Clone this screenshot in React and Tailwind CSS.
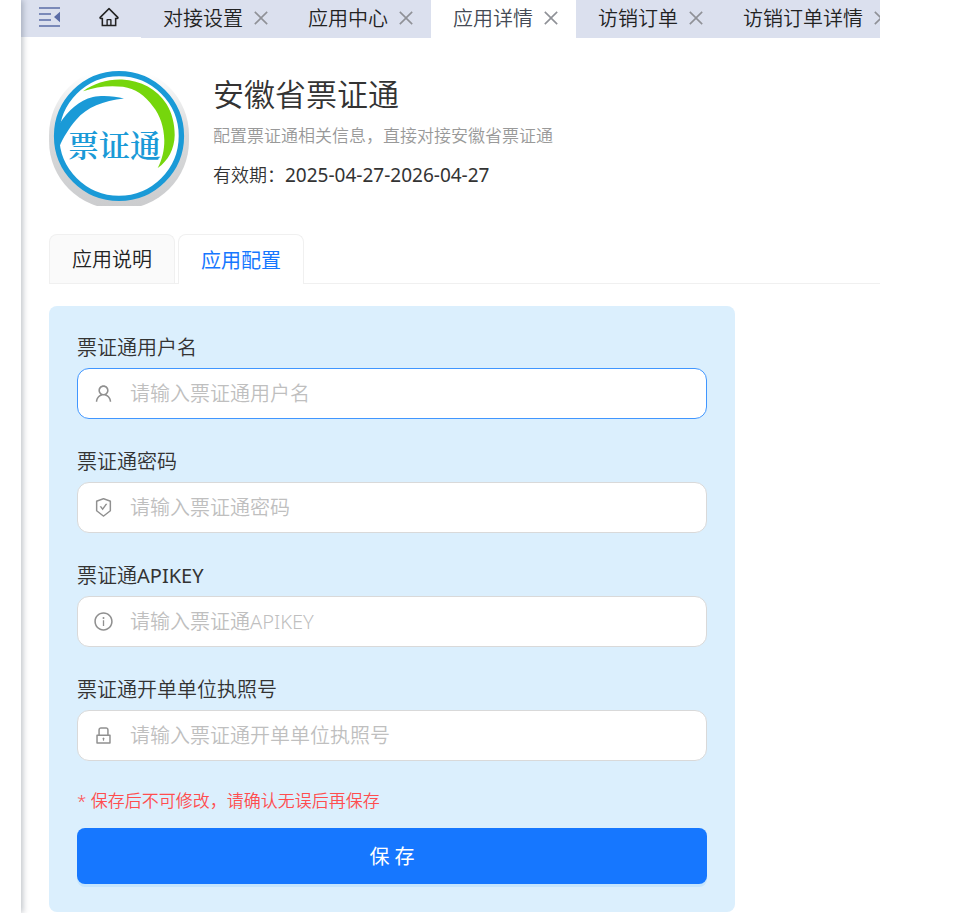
import {
  AiOutlineClose,
  AiOutlineHome,
  AiOutlineInfoCircle,
  AiOutlineLock,
  AiOutlineSafetyCertificate,
  AiOutlineUser,
} from "react-icons/ai";

const pageTabs = [
  { name: "对接设置" },
  { name: "应用中心" },
  { name: "应用详情", active: true },
  { name: "访销订单" },
  { name: "访销订单详情" },
];

const fields = [
  { id: "username", label: "票证通用户名", icon: AiOutlineUser, focused: true },
  { id: "password", label: "票证通密码", icon: AiOutlineSafetyCertificate },
  { id: "apikey", label: "票证通", suffix: "APIKEY", icon: AiOutlineInfoCircle },
  { id: "license", label: "票证通开单单位执照号", icon: AiOutlineLock },
];

function CollapseIcon() {
  return (
    <svg width="22" height="20" viewBox="0 0 22 20" fill="none" aria-hidden="true">
      <g stroke="#5b6ca6" strokeWidth="1.5">
        <path d="M0 1h21M0 7h12M0 13h12M0 19h21" />
      </g>
      <path d="M21 4.800v10.400L15 10z" fill="#5b6ca6" />
    </svg>
  );
}

function Logo() {
  return (
    <svg className="shrink-0" width="140" height="140" viewBox="0 0 140 140" role="img" aria-label="票证通">
      <defs>
        <linearGradient id="rim" x1="0" y1="0" x2="0" y2="1">
          <stop offset="0.05" stopColor="#ffffff" />
          <stop offset="0.45" stopColor="#d9dadb" />
          <stop offset="1" stopColor="#cbccce" />
        </linearGradient>
        <clipPath id="base">
          <rect width="140" height="139" />
        </clipPath>
      </defs>
      <rect width="140" height="142" rx="68" fill="url(#rim)" clipPath="url(#base)" />
      <circle cx="70" cy="69" r="62.400" fill="#fff" stroke="#1a9ad7" strokeWidth="5.400" />
      <path
        d="M34 24.300C45 16 59 12 73 12.500C92 13.500 108 22 117.500 37C123 46 125.700 57 125.700 68C125.500 82 119 94 108.700 101C113 93 115.500 83 115.300 73C115 60 111 48 104 39.500C96 28.500 86 21.500 74 19.800C60 18 46 20 34 24.300Z"
        fill="#76d60c"
      />
      <path
        d="M75 31.600C66 29 53 28 44 30C30 33 19 44 11 56C7 62 6 74 10.300 80C14 71 20 61 27 53C38 40 54 34 75 31.600Z"
        fill="#1a9ad7"
      />
      <text
        x="19"
        y="90"
        fontSize="31"
        fill="#1a9ad7"
        fontWeight="600"
        className="font-['Noto_Serif_CJK_SC','Noto_Sans_CJK_SC',sans-serif]"
      >
        票证通
      </text>
    </svg>
  );
}

function PageTab({ name, active }) {
  return (
    <div
      className={`flex shrink-0 items-center gap-2 pl-[22px] pr-[15px] ${
        active ? "bg-white text-[#444a55]" : "text-[#222]"
      }`}
    >
      <button type="button" className="whitespace-nowrap">{name}</button>
      <button type="button" aria-label={`关闭${name}`} className="pb-0.5 text-[#8f9197]">
        <AiOutlineClose size={20} />
      </button>
    </div>
  );
}

function Field({ id, label, suffix = "", icon: Icon, focused }) {
  return (
    <div className="mb-[29px]">
      <label htmlFor={id} className="block leading-7">
        {label}
        {suffix && <span className="font-normal">{suffix}</span>}
      </label>
      <div
        className={`mt-1.5 flex h-[51px] items-center gap-4 rounded-xl border bg-white px-[15px] ${
          focused ? "border-[#4096ff]" : "border-[#d9d9d9]"
        }`}
      >
        <Icon size={21} className="shrink-0 text-[#909090]" />
        <input
          id={id}
          type={id === "password" ? "password" : "text"}
          placeholder={`请输入${label}${suffix}`}
          className="min-w-0 flex-1 bg-transparent outline-none placeholder:text-[#bfbfbf]"
        />
      </div>
    </div>
  );
}

export default function App() {
  return (
    <div className="flex min-h-screen bg-white font-['Noto_Sans','Noto_Sans_CJK_SC',sans-serif] text-[20px] font-[350] text-[#333]">
      <aside className="relative z-10 w-[21px] shrink-0 bg-white shadow-[2px_0_6px_rgba(0,21,41,0.25)]" />
      <main className="mr-[83px] min-w-0 flex-1">
        <nav className="flex h-[38px] overflow-hidden bg-[#dbe0ee]">
          <div className="flex w-[120px] shrink-0 items-center justify-between border-b border-white pb-1 pl-[18px] pr-[21px]">
            <button type="button" aria-label="收起菜单"><CollapseIcon /></button>
            <button type="button" aria-label="首页"><AiOutlineHome size={22} className="text-[#222]" /></button>
          </div>
          {pageTabs.map((tab) => (
            <PageTab key={tab.name} {...tab} />
          ))}
        </nav>

        <div className="pl-7 pt-[29px]">
          <header className="flex gap-6">
            <Logo />
            <div className="pt-[7px]">
              <h1 className="text-[31px] leading-10">安徽省票证通</h1>
              <p className="mt-[9px] text-[17px] leading-[26px] text-[#999]">配置票证通相关信息，直接对接安徽省票证通</p>
              <p className="mt-3 text-[18px] leading-7">
                有效期：<span className="text-[19px] font-normal">2025-04-27-2026-04-27</span>
              </p>
            </div>
          </header>

          <div role="tablist" className="mt-[27px] flex gap-[3px] border-b border-[#f0f0f0]">
            <button
              type="button"
              role="tab"
              aria-selected="false"
              className="h-[49px] rounded-t-lg border border-b-0 border-[#f0f0f0] bg-[#fafafa] px-[22px] pt-0.5 text-[#222]"
            >
              应用说明
            </button>
            <button
              type="button"
              role="tab"
              aria-selected="true"
              className="-mb-px h-[50px] rounded-t-lg border border-b-0 border-[#f0f0f0] bg-white px-[22px] pt-0.5 font-normal text-[#1677ff]"
            >
              应用配置
            </button>
          </div>

          <form className="mt-[22px] max-w-[686px] rounded-lg bg-[#dbeffd] p-7">
            {fields.map((field) => (
              <Field key={field.id} {...field} />
            ))}
            <p className="text-[17px] leading-[22px] text-[#ff4d4f]">* 保存后不可修改，请确认无误后再保存</p>
            <button
              type="button"
              className="mt-4 h-14 w-full rounded-lg bg-[#1677ff] pt-0.5 font-normal text-white shadow-[0_3px_0_rgba(5,145,255,0.1)]"
            >
              保 存
            </button>
          </form>
        </div>
      </main>
    </div>
  );
}
